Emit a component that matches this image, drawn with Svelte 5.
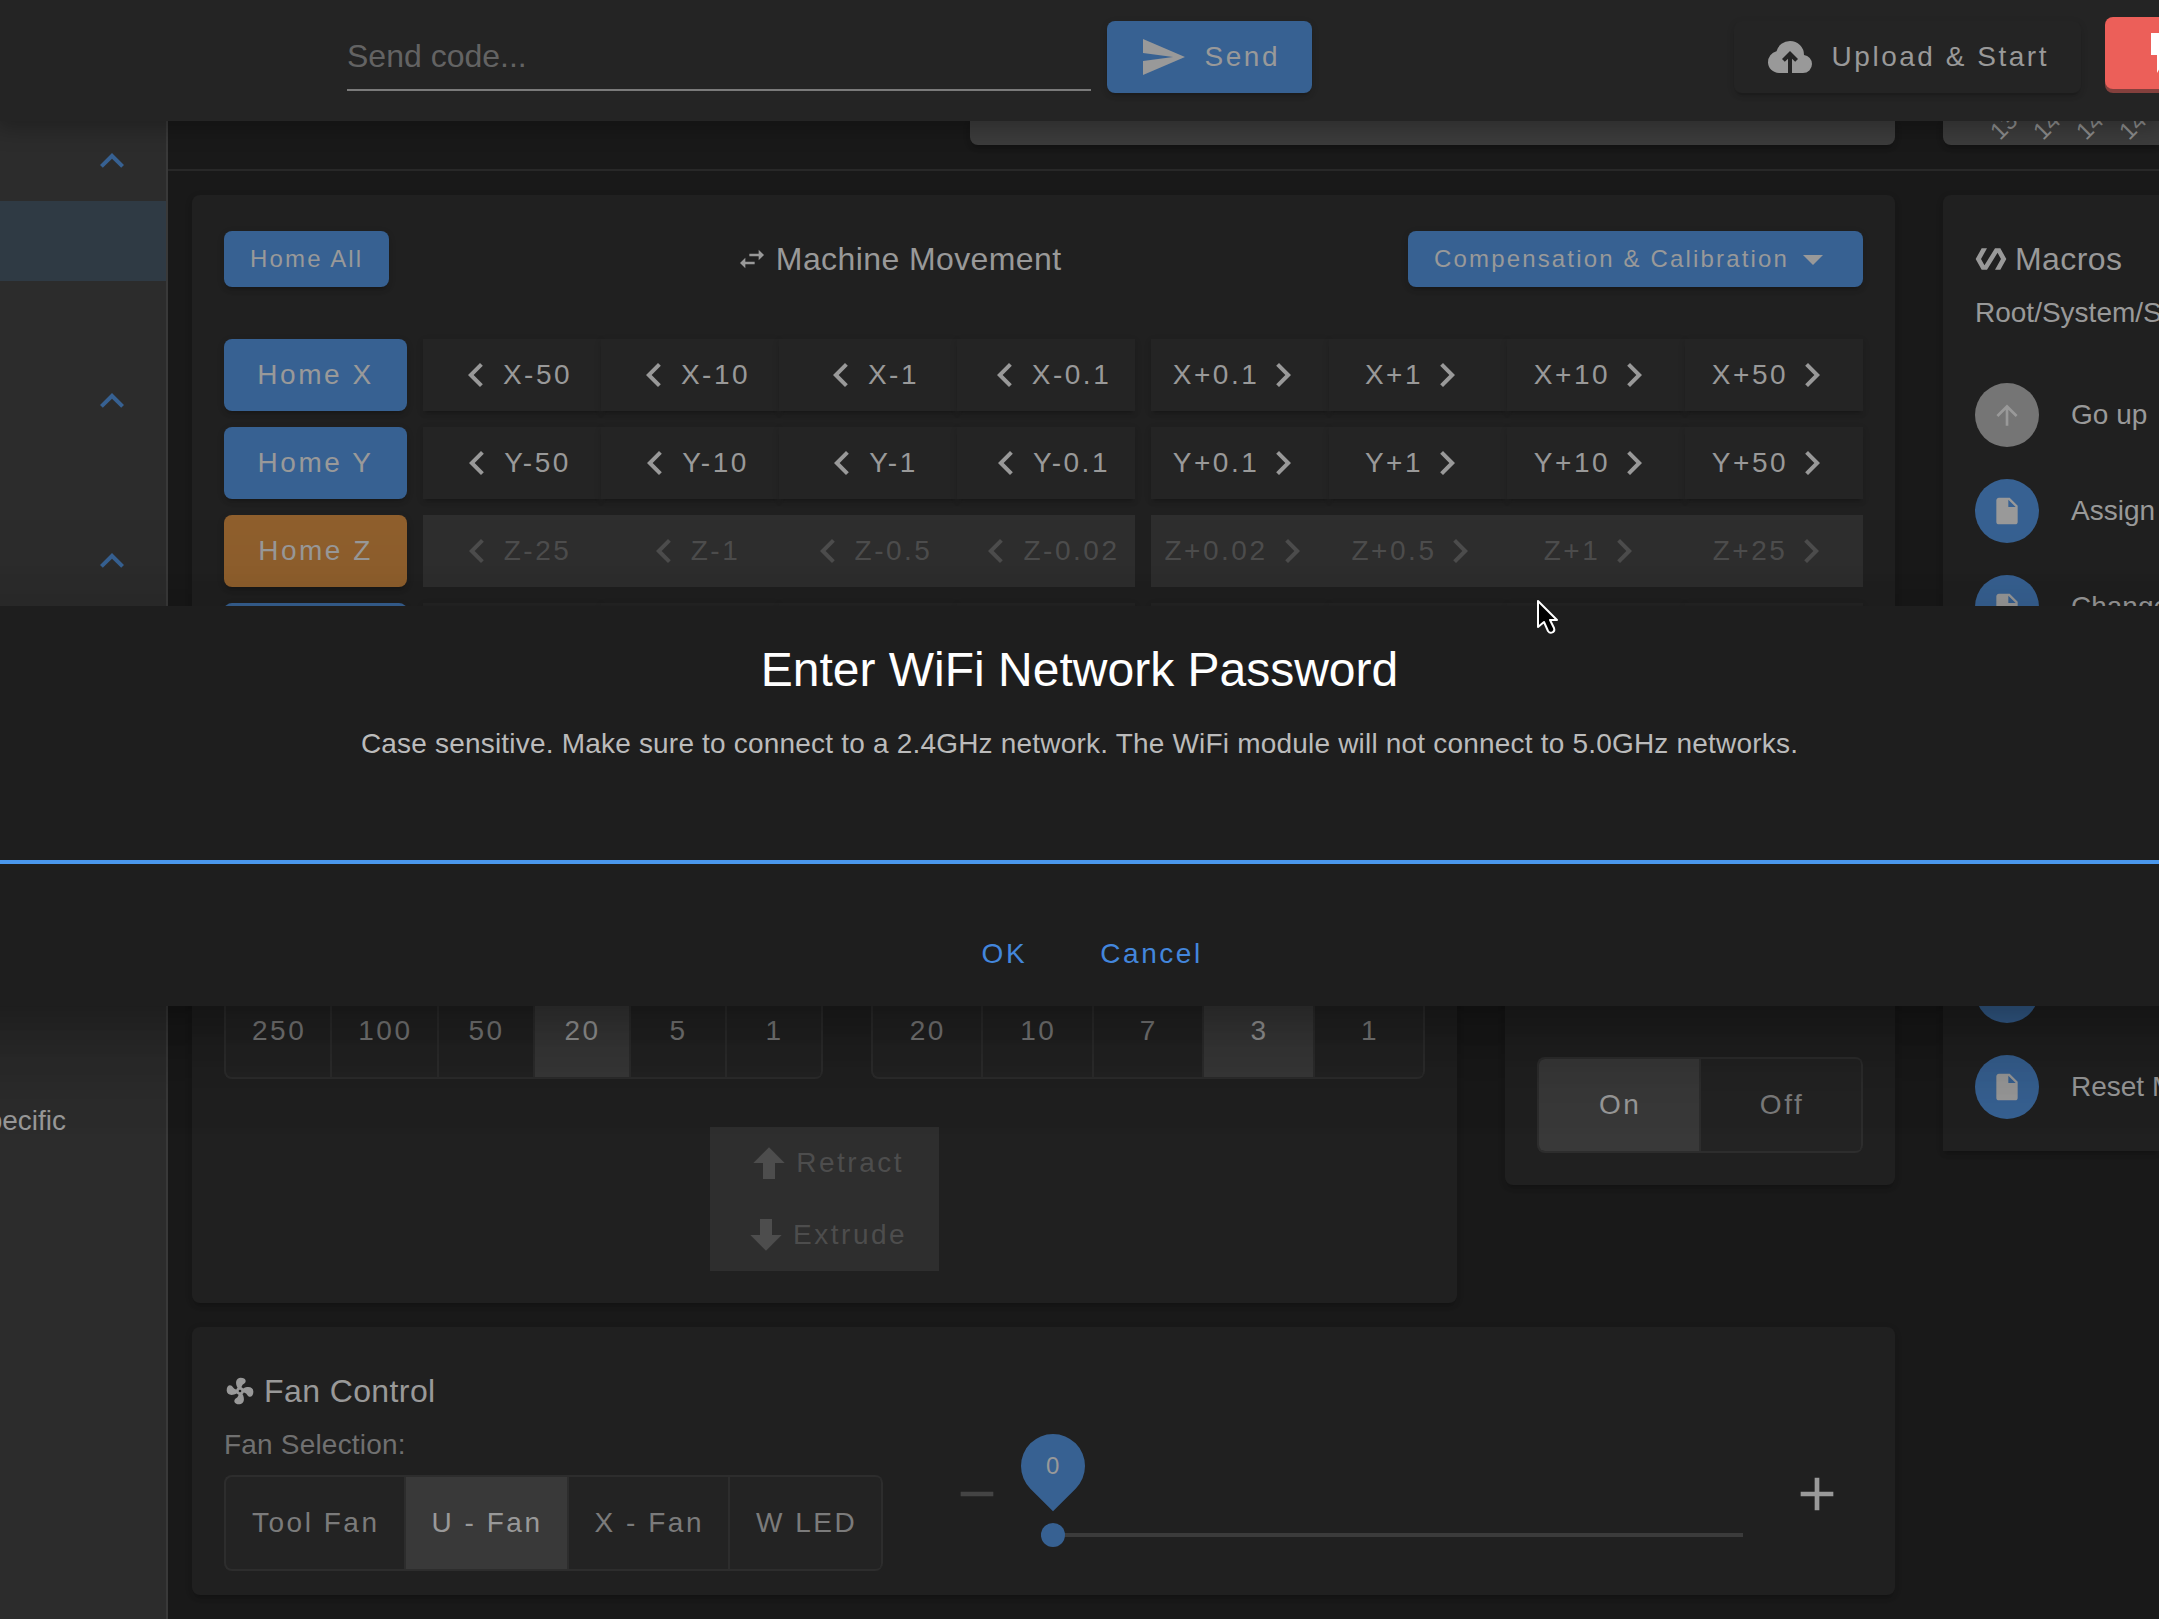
<script lang="ts">
  type Axis = { name: string; homed: boolean; minus: string[]; plus: string[] }

  const icons = {
    send: 'M2,21L23,12L2,3V10L17,12L2,14V21Z',
    upload:
      'M11 20H6.5Q4.22 20 2.61 18.43 1 16.85 1 14.58 1 12.63 2.17 11.1 3.35 9.57 5.25 9.15 5.88 6.85 7.75 5.43 9.63 4 12 4 14.93 4 16.96 6.04 19 8.07 19 11 20.73 11.2 21.86 12.5 23 13.78 23 15.5 23 17.38 21.69 18.69 20.38 20 18.5 20H13V12.85L14.6 14.4L16 13L12 9L8 13L9.4 14.4L11 12.85Z',
    flash: 'M7,2V13H10V22L17,10H13L17,2H7Z',
    chevronUp: 'M7.41,15.41L12,10.83L16.59,15.41L18,14L12,8L6,14L7.41,15.41Z',
    chevronLeft: 'M15.41,16.58L10.83,12L15.41,7.41L14,6L8,12L14,18L15.41,16.58Z',
    chevronRight: 'M8.59,16.58L13.17,12L8.59,7.41L10,6L16,12L10,18L8.59,16.58Z',
    menuDown: 'M7,10L12,15L17,10H7Z',
    swap: 'M21,9L17,5V8H10V10H17V13M7,11L3,15L7,19V16H14V14H7V11Z',
    polymer:
      'M19,4H15L7.1,16.63L4.5,12L9,4H5L0.5,12L5,20H9L16.9,7.37L19.5,12L15,20H19L23.5,12L19,4Z',
    arrowUp: 'M13,20H11V8L5.5,13.5L4.08,12.08L12,4.16L19.92,12.08L18.5,13.5L13,8V20Z',
    file: 'M13,9V3.5L18.5,9M6,2C4.89,2 4,2.89 4,4V20A2,2 0 0,0 6,22H18A2,2 0 0,0 20,20V8L14,2H6Z',
    arrowUpBold: 'M15,20H9V12H4.16L12,4.16L19.84,12H15V20Z',
    arrowDownBold: 'M9,4H15V12H19.84L12,19.84L4.16,12H9V4Z',
    fan: 'M12,11A1,1 0 0,0 11,12A1,1 0 0,0 12,13A1,1 0 0,0 13,12A1,1 0 0,0 12,11M12.5,2C17,2 17.11,5.57 14.75,6.75C13.76,7.24 13.32,8.29 13.13,9.22C13.61,9.42 14.03,9.73 14.35,10.13C18.05,8.13 22.03,8.92 22.03,12.5C22.03,17 18.46,17.1 17.28,14.73C16.78,13.74 15.72,13.3 14.79,13.11C14.59,13.59 14.28,14 13.88,14.34C15.87,18.03 15.08,22 11.5,22C7,22 6.91,18.42 9.27,17.24C10.25,16.75 10.69,15.71 10.89,14.79C10.4,14.59 9.97,14.27 9.65,13.87C5.96,15.85 2,15.07 2,11.5C2,7 5.56,6.89 6.74,9.26C7.24,10.25 8.29,10.68 9.22,10.87C9.41,10.39 9.73,9.97 10.14,9.65C8.15,5.96 8.94,2 12.5,2Z',
    minus: 'M19,13H5V11H19V13Z',
    plus: 'M19,13H13V19H11V13H5V11H11V5H13V11H19V13Z',
  }

  const nav = [
    { label: 'Machine Control', group: true },
    { label: 'Dashboard', active: true },
    { label: 'Console' },
    { label: 'Current Job', group: true },
    { label: 'Status' },
    { label: 'Files', group: true },
    { label: 'Jobs' },
    { label: 'Macros' },
    { label: 'Filaments' },
    { label: 'System' },
    { label: 'Settings', group: true },
    { label: 'General' },
    { label: 'Machine-Specific', text: true },
  ]

  const axes: Axis[] = [
    { name: 'X', homed: true, minus: ['-50', '-10', '-1', '-0.1'], plus: ['+0.1', '+1', '+10', '+50'] },
    { name: 'Y', homed: true, minus: ['-50', '-10', '-1', '-0.1'], plus: ['+0.1', '+1', '+10', '+50'] },
    { name: 'Z', homed: false, minus: ['-25', '-1', '-0.5', '-0.02'], plus: ['+0.02', '+0.5', '+1', '+25'] },
    { name: 'U', homed: true, minus: ['-50', '-10', '-1', '-0.1'], plus: ['+0.1', '+1', '+10', '+50'] },
  ]

  const macros = [
    'Assign Tools',
    'Change Filament',
    'Connect WiFi',
    'Disable WiFi',
    'Load Filament',
    'Maintenance',
    'Reset Machine',
  ]
  const ticks = ['13:55', '14:00', '14:05', '14:10', '14:15']

  const amounts = ['250', '100', '50', '20', '5', '1']
  const rates = ['20', '10', '7', '3', '1']
  const fans = ['Tool Fan', 'U - Fan', 'X - Fan', 'W LED']

  let code = $state('')
  let amount = $state('20')
  let rate = $state('3')
  let power = $state('On')
  let fan = $state('U - Fan')
  let speed = $state(0)
  let password = $state('')
  let dialog = $state(true)
</script>

{#snippet icon(path: string, size = 48)}
  <svg class="icon" width={size} height={size} viewBox="0 0 24 24" aria-hidden="true"><path d={path} /></svg>
{/snippet}

{#snippet toggle(options: string[], value: string, pick: (v: string) => void, label: string)}
  <div class="toggle" role="group" aria-label={label}>
    {#each options as option}
      <button class:on={option === value} aria-pressed={option === value} onclick={() => pick(option)}>{option}</button>
    {/each}
  </div>
{/snippet}

<div class="app">
  <header class="bar">
    <form class="code" onsubmit={(e) => e.preventDefault()}>
      <input type="text" placeholder="Send code..." aria-label="Send code" bind:value={code} />
      <button class="btn primary send">{@render icon(icons.send)}Send</button>
    </form>
    <button class="btn upload">{@render icon(icons.upload)}Upload &amp; Start</button>
    <button class="btn stop" aria-label="Emergency Stop">{@render icon(icons.flash)}</button>
  </header>

  <div class="body">
    <nav class="side">
      {#each nav as item}
        {#if item.group}
          <button class="group" aria-label={item.label}>{@render icon(icons.chevronUp)}</button>
        {:else}
          <a href="#top" class:active={item.active} aria-label={item.label}>{item.text ? item.label : ''}</a>
        {/if}
      {/each}
    </nav>

    <main>
      <div class="status">
        <div class="status-main"><div class="tile"></div></div>
        <div class="tile chart">
          <svg width="216" height="24" aria-hidden="true">
            {#each ticks as tick, i}
              <text transform="translate({57 + i * 43} 20) rotate(-45)">{tick}</text>
            {/each}
          </svg>
        </div>
      </div>

      <div class="dash">
        <div class="col">
          <section class="card">
            <div class="head">
              <button class="btn small primary">Home All</button>
              <h2 class="title">{@render icon(icons.swap, 32)}Machine Movement</h2>
              <button class="btn small primary">Compensation &amp; Calibration{@render icon(icons.menuDown)}</button>
            </div>
            <div class="moves">
              {#each axes as axis}
                <button class="btn home" class:primary={axis.homed} class:warn={!axis.homed}>Home {axis.name}</button>
                <div class="steps">
                  {#each axis.minus as step}
                    <button class="btn left" disabled={!axis.homed}>{@render icon(icons.chevronLeft)}{axis.name}{step}</button>
                  {/each}
                </div>
                <div class="steps">
                  {#each axis.plus as step}
                    <button class="btn" disabled={!axis.homed}>{axis.name}{step}{@render icon(icons.chevronRight)}</button>
                  {/each}
                </div>
              {/each}
            </div>
          </section>

          <div class="row">
            <section class="card extruder" aria-label="Extrusion Control">
              <div class="feeds">
                {@render toggle(amounts, amount, (v) => (amount = v), 'Feed amount in mm')}
                <div class="grow">
                  {@render toggle(rates, rate, (v) => (rate = v), 'Feedrate in mm/s')}
                </div>
              </div>
              <div class="feed-buttons">
                <button class="btn left" disabled>{@render icon(icons.arrowUpBold)}Retract</button>
                <button class="btn left" disabled>{@render icon(icons.arrowDownBold)}Extrude</button>
              </div>
            </section>

            <section class="card power" aria-label="ATX Power">
              <div class="grow">
                {@render toggle(['On', 'Off'], power, (v) => (power = v), 'ATX Power')}
              </div>
            </section>
          </div>

          <section class="card fans">
            <div>
              <h2 class="title">{@render icon(icons.fan, 32)}Fan Control</h2>
              <p class="caption">Fan Selection:</p>
              {@render toggle(fans, fan, (v) => (fan = v), 'Fan Selection')}
            </div>
            <div class="speed">
              <button class="round" aria-label="Decrease" disabled={speed === 0} onclick={() => speed--}>{@render icon(icons.minus, 56)}</button>
              <div class="slider">
                <div class="pin"><span>{speed}</span></div>
                <input type="range" min="0" max="100" aria-label="Fan speed" bind:value={speed} />
              </div>
              <button class="round" aria-label="Increase" onclick={() => speed++}>{@render icon(icons.plus, 56)}</button>
            </div>
          </section>
        </div>

        <section class="card macros">
          <h2 class="title">{@render icon(icons.polymer, 32)}Macros</h2>
          <p class="path">Root/System/Scripts</p>
          <ul>
            <li><a href="#up"><span class="avatar up">{@render icon(icons.arrowUp, 32)}</span>Go up</a></li>
            {#each macros as macro}
              <li><a href="#run"><span class="avatar">{@render icon(icons.file, 32)}</span>{macro}</a></li>
            {/each}
          </ul>
        </section>
      </div>
    </main>
  </div>

  {#if dialog}
    <div class="overlay">
      <div class="dialog" role="dialog" aria-labelledby="dialog-title">
        <h1 id="dialog-title">Enter WiFi Network Password</h1>
        <label for="password">Case sensitive. Make sure to connect to a 2.4GHz network. The WiFi module will not connect to 5.0GHz networks.</label>
        <input id="password" type="text" bind:value={password} />
        <div class="actions">
          <button class="btn flat" onclick={() => (dialog = false)}>OK</button>
          <button class="btn flat" onclick={() => (dialog = false)}>Cancel</button>
        </div>
      </div>
    </div>
  {/if}

  <svg class="cursor" width="24" height="38" viewBox="0 0 24 38" aria-hidden="true">
    <path d="M2 2V28L8 23L12 32Q14 35 17 33Q19 32 18 29L14 21H21Z" />
  </svg>
</div>

<style>
  :global(body) {
    margin: 0;
    background: #191919;
  }
  .app {
    --blue: #376192;
    --text: #999;
    --shadow: 0 6px 2px -4px rgba(0, 0, 0, 0.1), 0 4px 4px rgba(0, 0, 0, 0.08), 0 2px 8px rgba(0, 0, 0, 0.08);
    position: relative;
    display: flex;
    flex-direction: column;
    height: 100vh;
    overflow: hidden;
    background: #191919;
    color: var(--text);
    font-family: 'Liberation Sans', Arial, sans-serif;
    font-size: 28px;
  }
  .app :global(*) {
    box-sizing: border-box;
  }
  button,
  input {
    margin: 0;
    padding: 0;
    border: 0;
    background: none;
    color: inherit;
    font: inherit;
  }
  h1,
  h2,
  p,
  ul {
    margin: 0;
    padding: 0;
    font-weight: 400;
    list-style: none;
  }
  a {
    color: inherit;
    text-decoration: none;
  }
  .icon {
    flex: none;
    fill: currentColor;
  }

  .btn {
    display: flex;
    align-items: center;
    justify-content: center;
    height: 72px;
    padding: 0 32px;
    border-radius: 8px;
    background: #242424;
    box-shadow: var(--shadow);
    letter-spacing: 0.09em;
    white-space: nowrap;
  }
  .btn.small {
    height: 56px;
    padding: 0 26px;
    font-size: 24px;
  }
  .btn.primary {
    background: var(--blue);
  }
  .btn.warn {
    background: #8f5f2d;
  }
  .btn.left {
    gap: 3px;
  }
  .btn:disabled {
    background: #2e2e2e;
    box-shadow: none;
    color: #4d4d4d;
  }

  .bar {
    z-index: 1;
    display: flex;
    flex: none;
    align-items: flex-start;
    gap: 24px;
    height: 121px;
    padding: 21px 0 0 347px;
    background: #242424;
    box-shadow: 0 4px 20px 4px rgba(0, 0, 0, 0.26);
  }
  .code {
    display: flex;
    flex: 0 1 965px;
    gap: 16px;
    margin-right: auto;
  }
  .code input {
    flex: 1;
    min-width: 0;
    height: 70px;
    padding-top: 2px;
    border-bottom: 2px solid #7a7a7a;
    font-size: 32px;
    outline: none;
  }
  .code input::placeholder {
    color: #636363;
    opacity: 1;
  }
  .send,
  .upload {
    gap: 18px;
  }
  .stop {
    flex: none;
    justify-content: flex-start;
    width: 54px;
    margin-top: -4px;
    padding: 0 0 0 32px;
    border-radius: 8px 0 0 8px;
    background: #ec5f59;
    box-shadow: 0 4px 0 #84403d;
    color: #fff;
    overflow: hidden;
  }

  .body {
    display: flex;
    flex: 1;
    min-height: 0;
  }
  .side {
    flex: none;
    width: 168px;
    background: #2c2c2c;
    border-right: 2px solid #393939;
  }
  .side a,
  .side .group {
    display: flex;
    align-items: center;
    justify-content: flex-end;
    width: 100%;
    height: 80px;
    padding-right: 100px;
    overflow: hidden;
    white-space: nowrap;
  }
  .side .group {
    padding-right: 30px;
    color: var(--blue);
  }
  .side a.active {
    background: #2f3a44;
  }

  main {
    flex: 1;
    min-width: 0;
  }
  .status,
  .dash {
    display: grid;
    grid-template-columns: minmax(0, 1fr) 216px;
    gap: 48px;
    padding-left: 24px;
  }
  .status {
    height: 50px;
    border-bottom: 2px solid #282828;
  }
  .status-main {
    display: grid;
    grid-template-columns: 730px 1fr;
    gap: 48px;
  }
  .status-main .tile {
    grid-column: 2;
  }
  .tile {
    height: 24px;
    border-radius: 0 0 8px 8px;
    background: #3c3c3c;
    box-shadow: var(--shadow);
  }
  .chart {
    border-bottom-right-radius: 0;
    overflow: hidden;
  }
  .chart svg {
    display: block;
  }
  .chart text {
    fill: #8c8c8c;
    font-size: 24px;
  }

  .dash {
    align-items: start;
    padding-top: 24px;
  }
  .col {
    display: flex;
    flex-direction: column;
    gap: 24px;
  }
  .card {
    padding: 32px;
    border-radius: 8px;
    background: #202020;
    box-shadow: var(--shadow);
  }
  .title {
    display: flex;
    align-items: center;
    gap: 8px;
    height: 64px;
    font-size: 32px;
    letter-spacing: 0.0125em;
    white-space: nowrap;
  }
  .caption {
    margin-bottom: 8px;
    line-height: 44px;
    color: #707070;
    letter-spacing: 0.007em;
  }
  .head {
    display: flex;
    align-items: center;
    justify-content: space-between;
    margin-bottom: 48px;
  }
  .moves {
    display: grid;
    grid-template-columns: 183px 1fr 1fr;
    gap: 16px;
  }
  .btn.home {
    padding: 0;
  }
  .steps {
    display: grid;
    grid-template-columns: repeat(4, 1fr);
  }
  .steps .btn {
    padding: 0;
    border-radius: 0;
  }

  .row {
    display: grid;
    grid-template-columns: repeat(12, minmax(0, 1fr));
    align-items: start;
    column-gap: 48px;
  }
  .extruder {
    grid-column: span 9;
  }
  .feeds {
    display: flex;
    gap: 48px;
    margin-top: 220px;
  }
  .feeds .grow {
    flex: 1;
  }
  .feed-buttons {
    display: grid;
    width: max-content;
    margin: 48px auto 0;
  }
  .feed-buttons .btn {
    border-radius: 0;
  }
  .power {
    grid-column: span 3;
  }
  .power .grow {
    margin-top: 294px;
  }
  .toggle {
    display: flex;
    width: max-content;
    border: 2px solid #2d2d2d;
    border-right: 0;
    border-radius: 8px;
    background: #232323;
    overflow: hidden;
  }
  .grow .toggle {
    width: 100%;
  }
  .grow .toggle button {
    flex: 1;
  }
  .toggle button {
    min-width: 96px;
    height: 92px;
    padding: 0 24px 0 26px;
    border-right: 2px solid #2d2d2d;
    color: #7b7b7b;
    letter-spacing: 0.09em;
    white-space: nowrap;
  }
  .toggle button:last-child {
    border-radius: 0 6px 6px 0;
  }
  .toggle button.on {
    background: #393939;
    color: var(--text);
  }

  .fans {
    display: flex;
    gap: 66px;
    padding-bottom: 24px;
  }
  .speed {
    display: flex;
    flex: 1;
    align-items: center;
    align-self: flex-end;
    gap: 36px;
    padding: 0 18px 24px 0;
  }
  .round {
    display: flex;
  }
  .round:disabled {
    color: #444;
  }
  .slider {
    position: relative;
    flex: 1;
    display: flex;
    align-items: flex-end;
    height: 106px;
    margin-right: 10px;
  }
  .slider input {
    width: 100%;
    height: 24px;
    appearance: none;
  }
  .slider input::-webkit-slider-runnable-track {
    height: 4px;
    background: #3b3b3b;
  }
  .slider input::-webkit-slider-thumb {
    width: 24px;
    height: 24px;
    margin-top: -10px;
    border-radius: 50%;
    background: var(--blue);
    appearance: none;
  }
  .pin {
    position: absolute;
    bottom: 49px;
    left: -20px;
    display: flex;
    align-items: center;
    justify-content: center;
    width: 64px;
    height: 64px;
    border-radius: 50% 50% 0;
    background: var(--blue);
    font-size: 24px;
    transform: rotate(45deg);
  }
  .pin span {
    transform: rotate(-45deg);
  }

  .macros {
    padding: 32px 0 16px 32px;
    border-radius: 8px 0 0 0;
    overflow: hidden;
  }
  .path {
    margin-bottom: 32px;
    line-height: 44px;
    white-space: nowrap;
  }
  .macros a {
    display: flex;
    align-items: center;
    gap: 32px;
    height: 96px;
    white-space: nowrap;
  }
  .avatar {
    display: flex;
    flex: none;
    align-items: center;
    justify-content: center;
    width: 64px;
    height: 64px;
    border-radius: 50%;
    background: var(--blue);
  }
  .avatar.up {
    background: #757575;
  }

  .overlay {
    position: absolute;
    inset: 0;
    z-index: 2;
    display: flex;
    align-items: center;
    padding-bottom: 7px;
  }
  /* runs past both window edges so that its shadow has no visible ends */
  .dialog {
    display: flex;
    flex: 1;
    flex-direction: column;
    margin: 0 -96px;
    padding: 32px 0 16px;
    background: #1e1e1e;
    box-shadow: 0 22px 30px -14px rgba(0, 0, 0, 0.2), 0 48px 76px 6px rgba(0, 0, 0, 0.14), 0 18px 92px 16px rgba(0, 0, 0, 0.12);
    text-align: center;
  }
  .dialog h1 {
    color: #fff;
    font-size: 48px;
    line-height: 64px;
  }
  .dialog label {
    margin-top: 20px;
    color: #bbb;
    line-height: 44px;
    letter-spacing: 0.007em;
  }
  .dialog input {
    height: 64px;
    margin-top: 34px;
    border-bottom: 4px solid #4a97ec;
    color: #fff;
    font-size: 32px;
    text-align: center;
    outline: none;
  }
  .actions {
    display: flex;
    justify-content: center;
    margin-top: 54px;
    padding-left: 16px;
  }
  .btn.flat {
    min-width: 128px;
    background: none;
    box-shadow: none;
    color: #4386dc;
  }

  .cursor {
    position: absolute;
    top: 599px;
    left: 1536px;
    z-index: 3;
    fill: #000;
    stroke: #fff;
    stroke-width: 2;
    stroke-linejoin: round;
  }
</style>
